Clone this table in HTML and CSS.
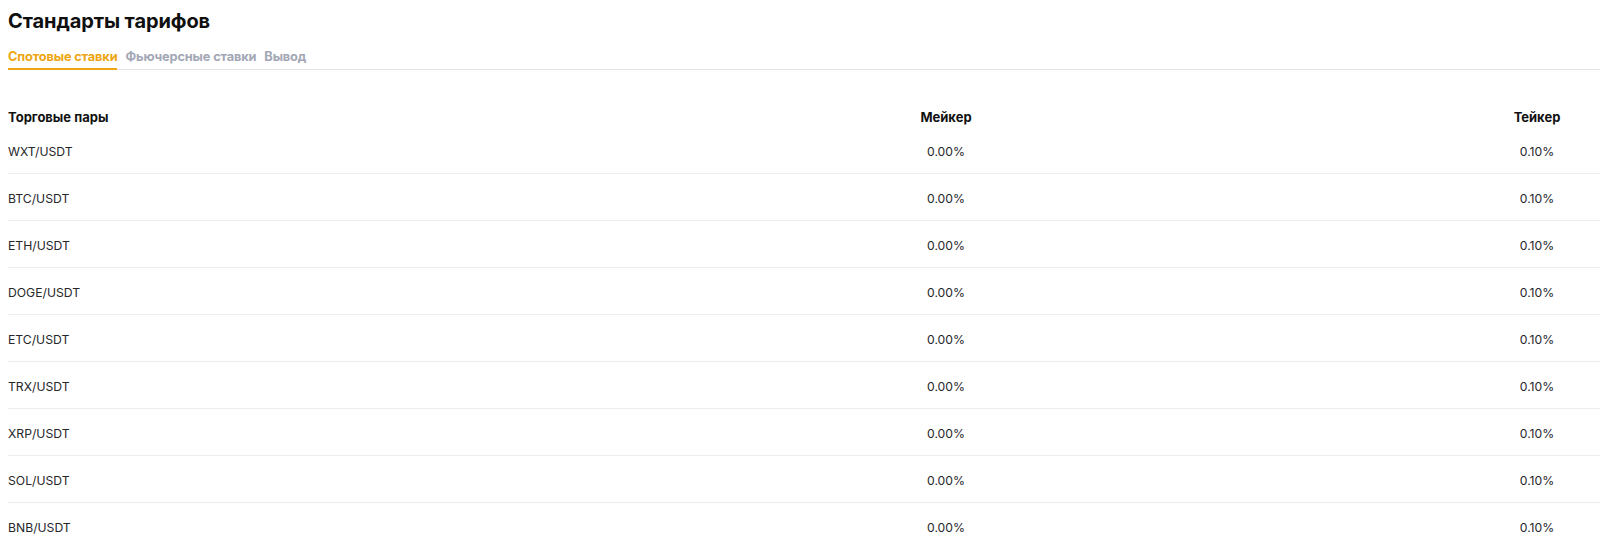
FILE: index.html
```html
<!DOCTYPE html>
<html lang="ru">
<head>
<meta charset="utf-8">
<title>Стандарты тарифов</title>
<link rel="stylesheet" href="styles.css">
</head>
<body>
<div class="page">
  <h1 class="title">Стандарты тарифов</h1>
  <div class="tabs">
    <div class="tab active">Спотовые ставки</div>
    <div class="tab">Фьючерсные ставки</div>
    <div class="tab">Вывод</div>
  </div>
  <div class="table">
    <div class="row head">
      <div class="c-pair">Торговые пары</div>
      <div class="c-maker">Мейкер</div>
      <div class="c-taker">Тейкер</div>
    </div>
    <div class="row"><div class="c-pair">WXT/USDT</div><div class="c-maker">0.00%</div><div class="c-taker">0.10%</div></div>
    <div class="row"><div class="c-pair">BTC/USDT</div><div class="c-maker">0.00%</div><div class="c-taker">0.10%</div></div>
    <div class="row"><div class="c-pair">ETH/USDT</div><div class="c-maker">0.00%</div><div class="c-taker">0.10%</div></div>
    <div class="row"><div class="c-pair">DOGE/USDT</div><div class="c-maker">0.00%</div><div class="c-taker">0.10%</div></div>
    <div class="row"><div class="c-pair">ETC/USDT</div><div class="c-maker">0.00%</div><div class="c-taker">0.10%</div></div>
    <div class="row"><div class="c-pair">TRX/USDT</div><div class="c-maker">0.00%</div><div class="c-taker">0.10%</div></div>
    <div class="row"><div class="c-pair">XRP/USDT</div><div class="c-maker">0.00%</div><div class="c-taker">0.10%</div></div>
    <div class="row"><div class="c-pair">SOL/USDT</div><div class="c-maker">0.00%</div><div class="c-taker">0.10%</div></div>
    <div class="row"><div class="c-pair">BNB/USDT</div><div class="c-maker">0.00%</div><div class="c-taker">0.10%</div></div>
  </div>
</div>
</body>
</html>
```

FILE: styles.css
```css
html, body {
  margin: 0;
  padding: 0;
  background: #ffffff;
}
body {
  font-family: Inter, "Noto Sans", "Liberation Sans", sans-serif;
  color: #1a1a1a;
  overflow: hidden;
}
.page {
  padding: 7px 0 0 8px;
}
.title {
  margin: 0;
  font-size: 20px;
  line-height: 28px;
  font-weight: 700;
  color: #0f0f10;
  letter-spacing: -0.1px;
}
.tabs {
  display: flex;
  gap: 8px;
  margin-top: 13px;
  border-bottom: 1px solid #e4e4e7;
}
.tab {
  font-size: 12.8px;
  font-weight: 700;
  line-height: 18px;
  padding-bottom: 2px;
  color: #a3a7b5;
  border-bottom: 2px solid transparent;
  margin-bottom: -1px;
  letter-spacing: -0.15px;
}
.tab.active {
  color: #eda611;
  border-bottom-color: #eda611;
}
.table {
  margin-top: 38px;
}
.row {
  display: grid;
  grid-template-columns: 838px 200px 1fr 126px;
  font-size: 12.2px;
  line-height: 18px;
  padding: 16px 0 12px;
  border-bottom: 1px solid #ececf0;
  color: #26262b;
}
.row:last-child {
  border-bottom: none;
}
.row.head {
  font-size: 13px;
  font-weight: 700;
  color: #111;
  padding: 0 0 1px;
  border-bottom: none;
}
.c-maker {
  grid-column: 2;
  text-align: center;
}
.c-taker {
  grid-column: 4;
  text-align: center;
}
```
